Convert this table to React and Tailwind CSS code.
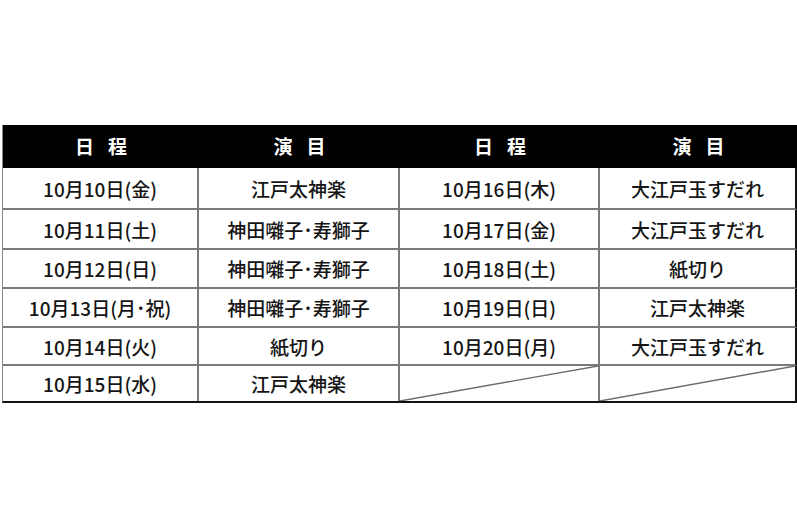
import React from 'react';

const rows = [
  ['10月10日(金)', '江戸太神楽', '10月16日(木)', '大江戸玉すだれ'],
  ['10月11日(土)', '神田囃子･寿獅子', '10月17日(金)', '大江戸玉すだれ'],
  ['10月12日(日)', '神田囃子･寿獅子', '10月18日(土)', '紙切り'],
  ['10月13日(月･祝)', '神田囃子･寿獅子', '10月19日(日)', '江戸太神楽'],
  ['10月14日(火)', '紙切り', '10月20日(月)', '大江戸玉すだれ'],
  ['10月15日(水)', '江戸太神楽', null, null],
];

// row heights in px, bottom line included (last row sits on the outer border)
const heights = ['h-[42px]', 'h-[40px]', 'h-[39px]', 'h-[39px]', 'h-[38px]', 'h-[35px]'];

const headers = [
  ['日', '程'],
  ['演', '目'],
  ['日', '程'],
  ['演', '目'],
];

// empty cell with a diagonal slash, like the source sheet
const Slash = () => (
  <svg className="absolute inset-0 w-full h-full" preserveAspectRatio="none" viewBox="0 0 100 100">
    <line x1="0" y1="100" x2="100" y2="0" stroke="#6b6b6b" strokeWidth="1.4" vectorEffect="non-scaling-stroke" />
  </svg>
);

const App = () => {
  return (
    <div
      className="w-[797px] h-[531px] bg-white pt-[125px] pl-[2px]"
      style={{ fontFamily: '"Noto Sans CJK JP", "Noto Sans", sans-serif' }}
    >
      <div className="w-[795px] border-l border-[#8a8a8a] border-b-2 border-b-[#111]">
        <div className="grid grid-cols-[196px_201px_200px_197px] h-[43px] bg-black">
          {headers.map((h, i) => (
            <div key={i} className="flex items-center justify-center gap-[14px] text-white text-[19px] font-semibold">
              <span>{h[0]}</span>
              <span>{h[1]}</span>
            </div>
          ))}
        </div>
        {rows.map((r, ri) => (
          <div key={ri} className={'grid grid-cols-[196px_201px_200px_197px] ' + heights[ri]}>
            {r.map((c, ci) => (
              <div
                key={ci}
                className={
                  'relative flex items-center justify-center text-[19px] font-medium text-[#151515] leading-none ' +
                  (ri === rows.length - 1 ? '' : 'border-b-2 border-b-[#7a7a7a] ') +
                  (ci === 3 ? 'border-r-2 border-r-[#111]' : 'border-r-2 border-r-[#7a7a7a]')
                }
              >
                {c === null ? <Slash /> : c}
              </div>
            ))}
          </div>
        ))}
      </div>
    </div>
  );
};

export default App;
